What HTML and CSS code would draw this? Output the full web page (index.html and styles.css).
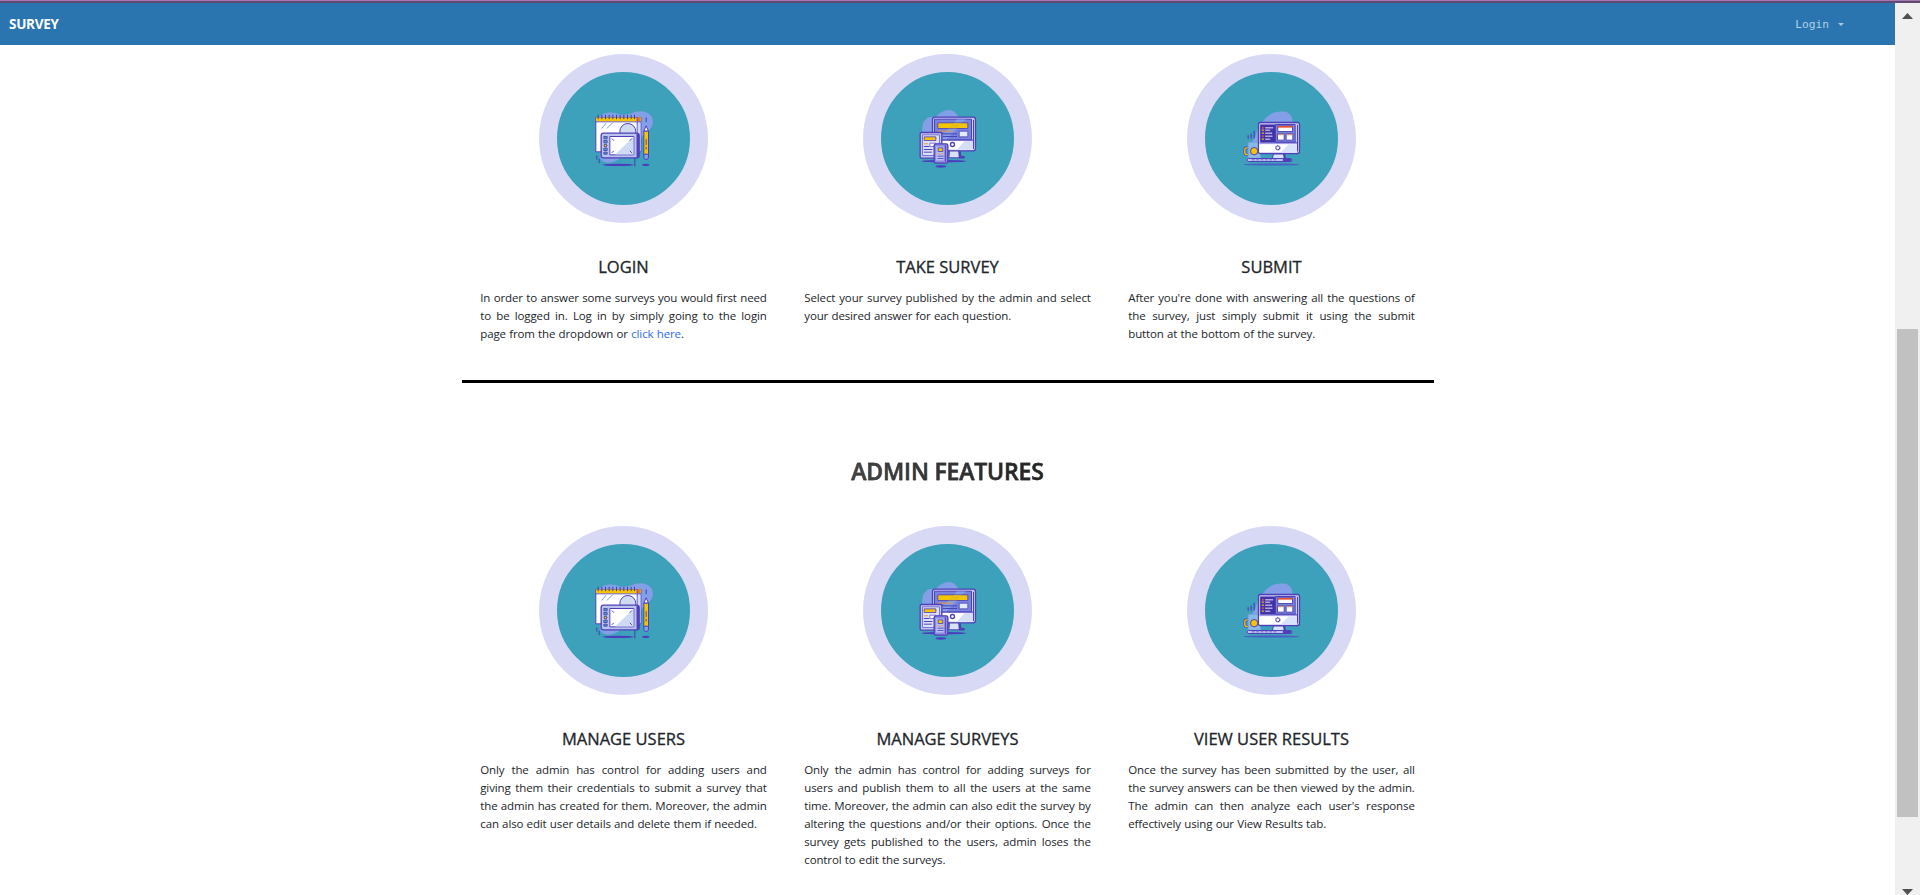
FILE: index.html
```html
<!DOCTYPE html>
<html lang="en">
<head>
<meta charset="utf-8">
<title>Survey</title>
<link rel="stylesheet" href="styles.css">
</head>
<body>
<svg class="defs" aria-hidden="true">
  <symbol id="tablet" viewBox="1.5 1.5 228 228">
    <path fill="#829fe8" d="M34 60C48 32 78 32 106 42C136 46 146 28 172 33C205 38 211 70 190 90C160 116 125 150 102 174C84 190 50 192 44 172Z"/>
    <path fill="#fff" stroke="#5040b8" stroke-width="3" d="M31 51h135v103H31z"/>
    <path fill="#cfdaf5" d="M155 64h10v88h-10z"/>
    <path fill="#f5c500" d="M32 51h134v12H32z"/><path fill="#ef7d16" d="M155 50h10v13h-10z"/>
    <path stroke="#5040b8" stroke-width="2.5" d="M31 64h135M155 50v60"/>
    <path stroke="#4a3aaa" stroke-width="3" d="M38 43v13M49 43v13M60 43v13M71 43v13M82 43v13M93 43v13M104 43v13M115 43v13M126 43v13M137 43v13M147 43v13"/>
    <path stroke="#6b83d8" stroke-width="2.5" d="M48 84l14-16M64 84l17-17"/>
    <circle cx="127" cy="93" r="24" fill="#cfdaf5" stroke="#5040b8" stroke-width="3"/>
    <rect x="47" y="98" width="114" height="74" rx="7" fill="#b9c4ef" stroke="#5040b8" stroke-width="4"/>
    <path fill="#5040b8" d="M153 99h4q4 0 4 5v62q0 5-5 5h-3z"/>
    <path fill="#fff" stroke="#5040b8" stroke-width="3" d="M73 108h72v55H73z"/>
    <path fill="#cfdaf5" d="M144 109v53H89z"/>
    <path stroke="#5040b8" stroke-width="3" d="M79 114l6 6M139 114l-6 6M79 157l6-6M139 157l-6-6"/>
    <path fill="#43a9c2" stroke="#4a3aaa" stroke-width="2.5" d="M55 108h10v7H55zM55 120h10v7H55zM55 143h10v7H55zM55 155h10v6H55z"/>
    <circle cx="60" cy="135" r="4" fill="#f5c500" stroke="#3b2d91" stroke-width="3"/>
    <path stroke="#4a3aaa" stroke-width="3" d="M34 165v12M41 175v13M148 172v26M182 51v14"/>
    <path fill="#fff" stroke="#5040b8" stroke-width="3" d="M175 92l7-16 7 16z"/>
    <path fill="#f5c500" stroke="#5040b8" stroke-width="3" d="M175 92h14v70h-14z"/>
    <path stroke="#5040b8" stroke-width="3" d="M182 116v18M182 139v8"/>
    <path fill="#829fe8" stroke="#5040b8" stroke-width="3" d="M175 161h14v9q0 7-7 7t-7-7z"/>
    <ellipse cx="98" cy="193" rx="47" ry="3.5" fill="#4b3dbd"/><ellipse cx="181" cy="193" rx="11" ry="3.5" fill="#4b3dbd"/>
  </symbol>
  <symbol id="devices" viewBox="-1.5 1.5 228 228">
    <path fill="#829fe8" d="M36 98C32 64 44 46 76 49C93 27 130 16 144 50V100z"/>
    <ellipse cx="100" cy="182" rx="67" ry="3.5" fill="#4b3dbd"/><ellipse cx="91" cy="198" rx="16" ry="3.5" fill="#4b3dbd"/>
    <path fill="#d5e2f7" stroke="#5040b8" stroke-width="3" d="M117 150h31l4 18h10v4h-47z"/><path fill="#5040b8" d="M143 151h6l4 17h9v5h-17z"/>
    <rect x="66" y="50" width="129" height="101" rx="7" fill="#c9cff5" stroke="#5040b8" stroke-width="4"/>
    <path fill="#7385df" stroke="#5040b8" stroke-width="3" d="M72 56h111v62H72z"/>
    <path fill="#829fe8" d="M139 57h26l-57 60H81z"/>
    <path fill="#fff" d="M72 120h116v27H72z"/><path fill="#d5def8" d="M164 120h24v27h-49z"/>
    <path stroke="#5040b8" stroke-width="3" d="M72 119h116M189 58v87"/>
    <path fill="#f5c500" stroke="#5040b8" stroke-width="2.5" d="M82 67h90v17H82z"/>
    <path fill="#e5be18" d="M130 68h24l-15 15h-24z"/>
    <path stroke="#ed943d" stroke-width="3" d="M82 92h45"/><path stroke="#5040b8" stroke-width="3" d="M82 100h58M97 108h43"/>
    <path fill="#e4eafd" stroke="#5040b8" stroke-width="2.5" d="M146 92h26v17h-26z"/>
    <circle cx="126" cy="132" r="6" fill="#fff" stroke="#5040b8" stroke-width="4"/>
    <rect x="29" y="96" width="65" height="77" rx="4" fill="#c3c7f0" stroke="#5040b8" stroke-width="4"/>
    <path fill="#dbe1fc" stroke="#5040b8" stroke-width="2" d="M36 103h51v62H36z"/>
    <path fill="#f5c500" stroke="#5040b8" stroke-width="2.5" d="M41 109h35v11H41z"/>
    <path stroke="#ed943d" stroke-width="3" d="M40 130h13"/><path stroke="#5040b8" stroke-width="3" d="M40 138h16M40 147h26M40 155h24"/>
    <path fill="#fff" stroke="#5040b8" stroke-width="2" d="M58 128h17v10H58z"/>
    <rect x="71" y="130" width="41" height="58" rx="5" fill="#8f8bdf" stroke="#5040b8" stroke-width="4"/>
    <path fill="#b5c2f5" d="M77 138h23v42H77z"/><path fill="#f5c500" stroke="#5040b8" stroke-width="2.5" d="M83 142h14v11H83z"/>
    <path stroke="#ed943d" stroke-width="2.5" d="M81 160h17"/><path stroke="#5040b8" stroke-width="2.5" d="M81 167h18M81 174h18M105 134v50"/>
  </symbol>
  <symbol id="desktop" viewBox="-1.5 1.5 228 228">
    <path fill="#829fe8" d="M42 134C72 110 58 94 82 68C98 40 124 30 152 34C170 37 175 55 174 68V130z"/>
    <path fill="#8bb7e8" stroke="#739fdb" stroke-width="2" d="M41 126h37v50H41z"/>
    <path stroke="#4b4bb5" stroke-width="4" d="M41 104v11M50 99v15M59 91v22"/>
    <path fill="none" stroke="#4b3dbd" stroke-width="8" d="M40 142h-4q-5 0-5 6v8q0 6 5 6h4"/><path fill="none" stroke="#f5c500" stroke-width="4" d="M40 142h-4q-5 0-5 6v8q0 6 5 6h4"/>
    <circle cx="59" cy="152" r="11" fill="#f5c500" stroke="#5040b8" stroke-width="3"/>
    <path fill="#d5e2f7" stroke="#5040b8" stroke-width="3" d="M117 160h33l4 16h-41z"/><path fill="#5040b8" d="M145 160h6l3 15h-6z"/>
    <rect x="72" y="66" width="123" height="93" rx="6" fill="#c9cff5" stroke="#5040b8" stroke-width="4"/>
    <path fill="#fff" d="M74 131h113v25H74z"/><path fill="#d8e2fa" d="M162 131h25v25h-48z"/>
    <path fill="#4632a8" d="M77 72h46v53H77z"/><path fill="#7285e0" stroke="#5040b8" stroke-width="3" d="M123 72h59v53h-59z"/>
    <path stroke="#5040b8" stroke-width="3" d="M77 127h112M189 73v80"/>
    <path stroke="#e56438" stroke-width="4" d="M82 82h6M82 107h6"/><path stroke="#f5c500" stroke-width="4" d="M82 89h6M82 98h6M82 116h6"/>
    <path stroke="#dfe6fc" stroke-width="3" d="M92 82h24M92 89h15M92 98h21M92 107h22M92 116h15"/>
    <path fill="#fff" stroke="#4632a8" stroke-width="2.5" d="M130 76h44v17h-44zM129 99h20v20h-20zM155 99h20v20h-20z"/>
    <path stroke="#e6512d" stroke-width="5" d="M130 79h44"/><path stroke="#c29887" stroke-width="4" d="M130 102h18M156 102h18"/>
    <circle cx="130" cy="142" r="6" fill="#fff" stroke="#5040b8" stroke-width="4" stroke-dasharray="3.5 1"/>
    <rect x="38" y="174" width="134" height="9" rx="4" fill="#bac5f1" stroke="#5040b8" stroke-width="3"/>
    <path fill="#5040b8" d="M145 175h25v8h-25z"/><path stroke="#5040b8" stroke-width="2" d="M52 178h74" stroke-dasharray="9 4"/>
    <ellipse cx="111" cy="192" rx="84" ry="3" fill="#4b60c3"/>
  </symbol>
</svg>
<div class="strip"></div>
<div class="window">
  <div class="page">
    <nav class="navbar">
      <a class="brand">SURVEY</a>
      <a class="login">Login<span class="caret"></span></a>
    </nav>
    <main class="container">
      <section class="row">
        <article class="card">
          <div class="disc"><svg><use href="#tablet"/></svg></div>
          <h5>LOGIN</h5>
          <p><span>In order to answer some surveys you would first need</span><span>to be logged in. Log in by simply going to the login</span><span>page from the dropdown or <a>click here</a>.</span></p>
        </article>
        <article class="card">
          <div class="disc"><svg><use href="#devices"/></svg></div>
          <h5>TAKE SURVEY</h5>
          <p><span>Select your survey published by the admin and select</span><span>your desired answer for each question.</span></p>
        </article>
        <article class="card">
          <div class="disc"><svg><use href="#desktop"/></svg></div>
          <h5>SUBMIT</h5>
          <p><span>After you're done with answering all the questions of</span><span>the survey, just simply submit it using the submit</span><span>button at the bottom of the survey.</span></p>
        </article>
      </section>
      <hr>
      <h2><span>ADMIN FEATURES</span></h2>
      <section class="row">
        <article class="card">
          <div class="disc"><svg><use href="#tablet"/></svg></div>
          <h5>MANAGE USERS</h5>
          <p><span>Only the admin has control for adding users and</span><span>giving them their credentials to submit a survey that</span><span>the admin has created for them. Moreover, the admin</span><span>can also edit user details and delete them if needed.</span></p>
        </article>
        <article class="card">
          <div class="disc"><svg><use href="#devices"/></svg></div>
          <h5>MANAGE SURVEYS</h5>
          <p><span>Only the admin has control for adding surveys for</span><span>users and publish them to all the users at the same</span><span>time. Moreover, the admin can also edit the survey by</span><span>altering the questions and/or their options. Once the</span><span>survey gets published to the users, admin loses the</span><span>control to edit the surveys.</span></p>
        </article>
        <article class="card">
          <div class="disc"><svg><use href="#desktop"/></svg></div>
          <h5>VIEW USER RESULTS</h5>
          <p><span>Once the survey has been submitted by the user, all</span><span>the survey answers can be then viewed by the admin.</span><span>The admin can then analyze each user's response</span><span>effectively using our View Results tab.</span></p>
        </article>
      </section>
    </main>
  </div>
  <div class="scrollbar">
    <svg class="arrow" viewBox="0 0 11 6"><path d="M0 6L5.5 0L11 6z"/></svg>
    <div class="thumb"></div>
    <svg class="arrow" viewBox="0 0 11 6"><path d="M0 0H11L5.5 6z"/></svg>
  </div>
</div>
</body>
</html>
```
FILE: styles.css
```css
* { box-sizing: border-box; }
body {
  margin: 0;
  height: 895px;
  overflow: hidden;
  background: #fff;
  color: #212529;
  font-family: "Open Sans", "Noto Sans", sans-serif;
}
.defs { display: none; }
.strip { height: 3px; background: #5f4a70; border-top: 1px solid #a777b2; }
.window { display: flex; height: 892px; }
.page { width: 1895px; overflow: hidden; }
.navbar {
  height: 42px;
  background: #2a75b0;
  display: flex;
  align-items: center;
  justify-content: space-between;
  padding: 0 51px 0 9px;
}
.brand { color: #fff; font-size: 13.5px; font-weight: 700; letter-spacing: -0.3px; }
.login {
  display: flex;
  align-items: center;
  gap: 9px;
  color: #b2d0e6;
  font: 11.2px "DejaVu Sans Mono", monospace;
}
.caret { border: 3px solid transparent; border-top-color: #a9c8df; border-bottom: 0; }
.container { width: 972px; margin: 0 auto; padding-top: 9px; }
.row { display: flex; }
.card { width: 324px; padding: 0 18.75px; }
.disc {
  width: 169px;
  height: 169px;
  margin: 0 auto;
  border: 18px solid #d8d9f5;
  border-radius: 50%;
  background: #3da1bb;
  display: flex;
  align-items: center;
  justify-content: center;
}
.disc svg { width: 76px; height: 76px; }
h5 {
  margin: 33px 0 11px;
  font-size: 16.5px;
  line-height: 22px;
  font-weight: 500;
  letter-spacing: 0;
  -webkit-text-stroke: 0.3px #212529;
  text-align: center;
  white-space: nowrap;
}
p { margin: 0; font-size: 11.5px; line-height: 18px; letter-spacing: -0.12px; word-spacing: 0.4px; }
p span { display: block; white-space: nowrap; text-align-last: justify; }
p span:last-child { text-align-last: left; }
p a { color: #2e6bf6; }
hr { height: 3px; margin: 37px 0 0; border: 0; background: #000; }
h2 {
  margin: 72px 0 39px;
  font-size: 23px;
  line-height: 32px;
  font-weight: 600;
  letter-spacing: -0.18px;
  text-align: center;
}
h2 span {
  background: linear-gradient(90deg, #444, #222);
  -webkit-background-clip: text;
  background-clip: text;
  -webkit-text-fill-color: transparent;
  -webkit-text-stroke: 0.4px #333;
}
.scrollbar {
  width: 25px;
  background: #f0f0f0;
  display: flex;
  flex-direction: column;
  align-items: center;
  padding: 10px 0 0;
}
.arrow { width: 11px; height: 6px; fill: #505050; flex: none; }
.thumb { width: 21px; height: 488px; margin: 310px 0 72px; background: #c1c1c1; flex: none; }
```
